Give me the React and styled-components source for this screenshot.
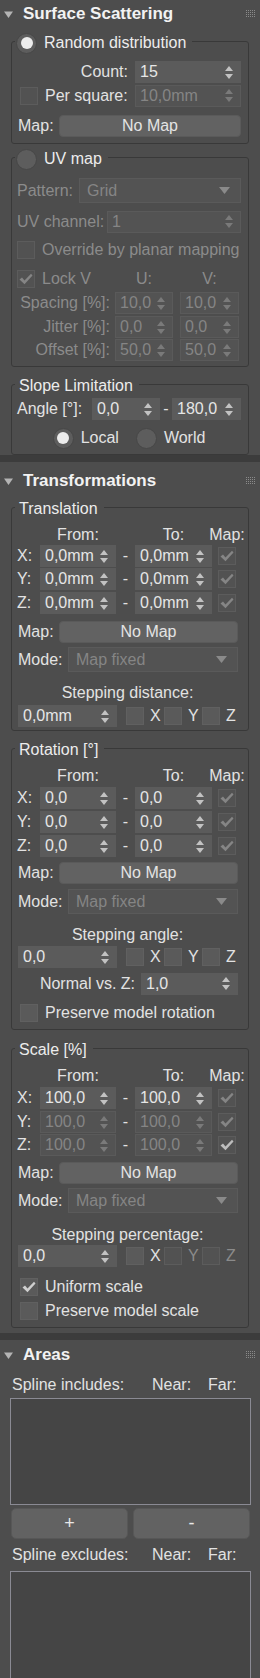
import React from 'react'
import styled, { createGlobalStyle } from 'styled-components'

const GlobalStyle = createGlobalStyle`
  html, body {
    margin: 0;
    padding: 0;
    background: #4d4d4d;
  }
  body {
    font-family: "Liberation Sans", Arial, sans-serif;
    font-size: 16px;
    color: #e2e2e2;
  }
  * { box-sizing: border-box; }
`

const Panel = styled.div`
  width: 260px;
  height: 1678px;
  overflow: hidden;
  background: #4d4d4d;
`

const Divider = styled.div`
  height: 7px;
  background: #3c3c3c;
`

const Rollout = styled.section`
  padding-bottom: ${p => p.$pb ?? 0}px;
`

const Header = styled.div`
  display: flex;
  align-items: center;
  height: ${p => p.$h}px;
  padding: ${p => p.$pt ?? 0}px 5px 0 4px;
`

const Title = styled.h2`
  flex: 1;
  margin: 0 0 0 10px;
  font-size: 17px;
  font-weight: bold;
  color: #f2f2f2;
`

const Body = styled.div`
  padding: ${p => p.$pad ?? '0 11px'};
`

const Group = styled.fieldset`
  margin: ${p => p.$mt ?? 0}px 0 0;
  padding: ${p => p.$pt}px ${p => p.$pr ?? 7}px ${p => p.$pb}px 5px;
  border: 1px solid #393939;
  border-radius: 3px;
  min-width: 0;
`

const Legend = styled.legend`
  display: flex;
  align-items: center;
  gap: 7px;
  height: 26px;
  padding: 4px 6px 0 ${p => p.$pl ?? 4}px;
  margin-left: ${p => p.$ml ?? -2}px;
  color: #ececec;
  white-space: nowrap;
`

const Row = styled.div`
  display: flex;
  align-items: center;
  gap: ${p => p.$gap ?? 0}px;
  height: ${p => p.$h ?? 22}px;
  margin-top: ${p => p.$mt ?? 0}px;
  justify-content: ${p => p.$justify ?? 'flex-start'};
`

const Label = styled.span`
  flex: ${p => (p.$w ? 'none' : p.$grow ? 1 : 'none')};
  width: ${p => (p.$w ? `${p.$w}px` : 'auto')};
  margin-left: ${p => p.$ml ?? 0}px;
  padding-right: ${p => p.$pr ?? 0}px;
  text-align: ${p => p.$align ?? 'left'};
  color: ${p => (p.$off ? '#8b8b8b' : '#e2e2e2')};
  white-space: nowrap;
`

const Field = styled.div`
  display: flex;
  align-items: center;
  flex: ${p => (p.$w ? 'none' : 1)};
  width: ${p => (p.$w ? `${p.$w}px` : 'auto')};
  height: 22px;
  margin-left: ${p => p.$ml ?? 0}px;
  padding: 0 7px 0 4px;
  background: ${p => (p.$off ? '#535353' : '#5b5b5b')};
  border: 1px solid ${p => (p.$off ? '#5a5a5a' : '#5b5b5b')};
  color: ${p => (p.$off ? '#858585' : '#e6e6e6')};
`

const FieldValue = styled.span`
  flex: 1;
  white-space: nowrap;
  overflow: hidden;
`

const Select = styled.div`
  display: flex;
  align-items: center;
  flex: 1;
  height: 25px;
  padding: 0 10px 0 7px;
  background: #535353;
  border: 1px solid #5a5a5a;
  color: #858585;
`

const MapButton = styled.button`
  flex: 1;
  height: 22px;
  padding: 0;
  border: 1px solid #5a5a5a;
  border-radius: 4px;
  background: #626262;
  color: #e4e4e4;
  font: inherit;
`

const Box = styled.span`
  display: grid;
  place-items: center;
  flex: none;
  width: 18px;
  height: 18px;
  margin-left: ${p => p.$ml ?? 0}px;
  background: ${p => (p.$off ? '#525252' : '#5a5a5a')};
  border: 1px solid ${p => (p.$off ? '#5c5c5c' : '#606060')};
`

const RadioDot = styled.span`
  display: grid;
  place-items: center;
  flex: none;
  width: 21px;
  height: 21px;
  border-radius: 50%;
  background: #5d5d5d;
  border: 1px solid #474747;

  &::after {
    content: '';
    display: ${p => (p.$on ? 'block' : 'none')};
    width: 12px;
    height: 12px;
    border-radius: 50%;
    background: #ececec;
  }
`

const PairGrid = styled.div`
  display: grid;
  grid-template-columns: 93px 58px 61px;
  column-gap: 5px;
  align-items: center;
  height: 22px;
  margin-top: ${p => p.$mt ?? 0}px;

  & > :nth-child(3) { margin-left: 2px; }
`

const AxisGrid = styled.div`
  display: grid;
  grid-template-columns: 23px 76px 19px 77px 6px 18px;
  align-items: center;
  height: ${p => p.$h ?? 22}px;
  margin-top: ${p => p.$mt ?? 0}px;
`

const Center = styled.span`
  justify-self: center;
  white-space: nowrap;
  color: ${p => (p.$off ? '#8b8b8b' : '#e2e2e2')};
`

const Caption = styled.div`
  height: 20px;
  margin-top: ${p => p.$mt ?? 0}px;
  line-height: 20px;
  text-align: center;
`

const StepCells = styled.div`
  display: grid;
  grid-template-columns: repeat(3, 38px);
  margin-left: 9px;
`

const StepCell = styled.span`
  display: flex;
  align-items: center;
  gap: 6px;
  color: ${p => (p.$off ? '#8b8b8b' : '#e2e2e2')};
`

const ListBox = styled.div`
  height: ${p => p.$h}px;
  margin-top: ${p => p.$mt}px;
  background: #454545;
  border: 1px solid #8a8a93;
`

const ListHead = styled.div`
  display: grid;
  grid-template-columns: 140px 56px auto;
  height: 18px;
  margin-top: ${p => p.$mt}px;
  padding-left: 2px;
  line-height: 18px;
`

const ButtonPair = styled.div`
  display: grid;
  grid-template-columns: 117px 117px;
  column-gap: 5px;
  margin: 3px 0 0 1px;
`

const FlatButton = styled.button`
  height: 31px;
  border: 1px solid #575757;
  border-radius: 5px;
  background: #626262;
  color: #e8e8e8;
  font: 18px "Liberation Sans", Arial, sans-serif;
`

const Triangle = () => (
  <svg width="9" height="7" viewBox="0 0 9 7">
    <path d="M0 0.5 L9 0.5 L4.5 7 Z" fill="#b4b4b4" />
  </svg>
)

const Grip = () => (
  <svg width="9" height="8" viewBox="0 0 9 8">
    {[0, 2, 4, 6].map(y =>
      [0, 2, 4, 6, 8].map(x => <rect key={`${x}-${y}`} x={x} y={y} width="1" height="1" fill="#8a8a8a" />)
    )}
  </svg>
)

const Arrows = ({ off }) => (
  <svg width="8" height="15" viewBox="0 0 8 15">
    <path d="M0 6 L4 1 L8 6 Z" fill={off ? '#7a7a7a' : '#c2c2c2'} />
    <path d="M0 9 L4 14 L8 9 Z" fill={off ? '#7a7a7a' : '#c2c2c2'} />
  </svg>
)

// heavy check, like the ✔ the original control draws
const Tick = ({ color = '#858585' }) => (
  <svg width="14" height="12" viewBox="0 0 14 12">
    <path d="M0.5 6.5 L3 4.5 L5.5 7.5 L12 0.8 L13.5 2.5 L5.5 11.2 Z" fill={color} />
  </svg>
)

const DownArrow = () => (
  <svg width="11" height="7" viewBox="0 0 11 7">
    <path d="M0 0 L11 0 L5.5 7 Z" fill="#8a8a8a" />
  </svg>
)

const Spinner = ({ value, off, w, ml }) => (
  <Field $off={off} $w={w} $ml={ml}>
    <FieldValue>{value}</FieldValue>
    <Arrows off={off} />
  </Field>
)

const Dropdown = ({ value }) => (
  <Select>
    <FieldValue>{value}</FieldValue>
    <DownArrow />
  </Select>
)

const Check = ({ on, off, ml, tick }) => (
  <Box $off={off} $ml={ml}>{on && <Tick color={tick} />}</Box>
)

const RolloutHeader = ({ title, h, pt }) => (
  <Header $h={h} $pt={pt}>
    <Triangle />
    <Title>{title}</Title>
    <Grip />
  </Header>
)

const AxisRows = ({ rows, mt }) =>
  rows.map((r, i) => (
    <AxisGrid key={r.axis} $mt={mt[i]}>
      <Label>{r.axis}:</Label>
      <Spinner value={r.from} off={r.off} />
      <Center>-</Center>
      <Spinner value={r.to} off={r.off} />
      <span />
      <Check on off tick={r.tick} />
    </AxisGrid>
  ))

const Stepping = ({ value, w = 99, off }) => (
  <Row $mt={0}>
    <Spinner value={value} w={w} ml={1} />
    <StepCells>
      {['X', 'Y', 'Z'].map((a, i) => (
        <StepCell key={a} $off={off && i > 0}>
          <Check off={off && i > 0} />
          {a}
        </StepCell>
      ))}
    </StepCells>
  </Row>
)

const TransformGroup = ({ title, rows, axisMt, mt, step, stepLabel, stepMt, pb, gaps, children }) => (
  <Group $mt={mt} $pt={6} $pb={pb} $pr={10}>
    <Legend>{title}</Legend>
    <AxisGrid $h={18}>
      <span />
      <Center>From:</Center>
      <span />
      <Center>To:</Center>
      <span />
      <Center>Map:</Center>
    </AxisGrid>
    <AxisRows rows={rows} mt={axisMt} />
    <Row $mt={gaps[0]}>
      <Label $w={41} $ml={1}>Map:</Label>
      <MapButton>No Map</MapButton>
    </Row>
    <Row $h={25} $mt={gaps[1]}>
      <Label $w={50} $ml={1}>Mode:</Label>
      <Dropdown value="Map fixed" />
    </Row>
    <Caption $mt={stepMt}>{stepLabel}</Caption>
    <Row $mt={gaps[2]}>
      {step}
    </Row>
    {children}
  </Group>
)

export default function App() {
  return (
    <Panel>
      <GlobalStyle />

      <Rollout>
        <RolloutHeader title="Surface Scattering" h={28} />
        <Body>
          <Group $pt={7} $pb={6}>
            <Legend $pl={1}>
              <RadioDot $on />
              Random distribution
            </Legend>
            <Row>
              <Label $grow $align="right" $pr={7}>Count:</Label>
              <Spinner value="15" w={106} />
            </Row>
            <Row $mt={1} $h={23}>
              <Check ml={3} off />
              <Label $ml={7}>Per square:</Label>
              <Label $grow />
              <Spinner value="10,0mm" w={106} off />
            </Row>
            <Row $mt={7} $h={23}>
              <Label $w={41} $ml={1}>Map:</Label>
              <MapButton>No Map</MapButton>
            </Row>
          </Group>

          <Group $pt={8} $pb={5}>
            <Legend $pl={1}>
              <RadioDot />
              UV map
            </Legend>
            <Row $h={25}>
              <Label $w={62} $off>Pattern:</Label>
              <Dropdown value="Grid" />
            </Row>
            <Row $mt={7} $h={23}>
              <Label $w={90} $off>UV channel:</Label>
              <Spinner value="1" off />
            </Row>
            <Row $mt={6}>
              <Check off />
              <Label $ml={7} $off>Override by planar mapping</Label>
            </Row>
            <PairGrid $mt={7}>
              <Row>
                <Check on off />
                <Label $ml={7} $off>Lock V</Label>
              </Row>
              <Center $off>U:</Center>
              <Center $off>V:</Center>
            </PairGrid>
            {[
              ['Spacing [%]:', '10,0', '10,0', 2],
              ['Jitter [%]:', '0,0', '0,0', 2],
              ['Offset [%]:', '50,0', '50,0', 1]
            ].map(([label, u, v, mt]) => (
              <PairGrid key={label} $mt={mt}>
                <Label $align="right" $off>{label}</Label>
                <Spinner value={u} off />
                <Spinner value={v} off />
              </PairGrid>
            ))}
          </Group>

          <Group $mt={4} $pt={1} $pb={5}>
            <Legend>Slope Limitation</Legend>
            <Row>
              <Label $w={75}>Angle [°]:</Label>
              <Spinner value="0,0" w={68} />
              <Label $w={12} $align="center">-</Label>
              <Spinner value="180,0" />
            </Row>
            <Row $mt={7} $justify="center" $gap={7}>
              <RadioDot $on />
              <Label $pr={10}>Local</Label>
              <RadioDot />
              <Label>World</Label>
            </Row>
          </Group>
        </Body>
      </Rollout>

      <Divider />

      <Rollout $pb={5}>
        <RolloutHeader title="Transformations" h={32} pt={6} />
        <Body>
          <TransformGroup
            title="Translation"
            pb={3}
            rows={[
              { axis: 'X', from: '0,0mm', to: '0,0mm' },
              { axis: 'Y', from: '0,0mm', to: '0,0mm' },
              { axis: 'Z', from: '0,0mm', to: '0,0mm' }
            ]}
            axisMt={[1, 1, 2]}
            gaps={[7, 4, 2]}
            stepMt={11}
            stepLabel="Stepping distance:"
            step={<Stepping value="0,0mm" />}
          />

          <TransformGroup
            title="Rotation [°]"
            mt={4}
            pb={5}
            rows={[
              { axis: 'X', from: '0,0', to: '0,0' },
              { axis: 'Y', from: '0,0', to: '0,0' },
              { axis: 'Z', from: '0,0', to: '0,0' }
            ]}
            axisMt={[2, 2, 2]}
            gaps={[5, 5, 1]}
            stepMt={11}
            stepLabel="Stepping angle:"
            step={<Stepping value="0,0" />}
          >
            <Row $mt={4} $h={23}>
              <Label $grow $align="right" $pr={6}>Normal vs. Z:</Label>
              <Spinner value="1,0" w={97} />
            </Row>
            <Row $mt={7}>
              <Check ml={3} />
              <Label $ml={7}>Preserve model rotation</Label>
            </Row>
          </TransformGroup>

          <TransformGroup
            title="Scale [%]"
            mt={5}
            pb={5}
            rows={[
              { axis: 'X', from: '100,0', to: '100,0' },
              { axis: 'Y', from: '100,0', to: '100,0', off: true },
              { axis: 'Z', from: '100,0', to: '100,0', off: true, tick: '#bdbdbd' }
            ]}
            axisMt={[2, 2, 1]}
            gaps={[6, 4, 0]}
            stepMt={12}
            stepLabel="Stepping percentage:"
            step={<Stepping value="0,0" off />}
          >
            <Row $mt={9}>
              <Check on ml={3} tick="#cfcfcf" />
              <Label $ml={7}>Uniform scale</Label>
            </Row>
            <Row $mt={2}>
              <Check ml={3} />
              <Label $ml={7}>Preserve model scale</Label>
            </Row>
          </TransformGroup>
        </Body>
      </Rollout>

      <Divider />

      <Rollout>
        <RolloutHeader title="Areas" h={30} />
        <Body $pad="0 9px 0 10px">
          <ListHead $mt={6}>
            <span>Spline includes:</span>
            <span>Near:</span>
            <span>Far:</span>
          </ListHead>
          <ListBox $h={107} $mt={4} />
          <ButtonPair>
            <FlatButton>+</FlatButton>
            <FlatButton>-</FlatButton>
          </ButtonPair>
          <ListHead $mt={7}>
            <span>Spline excludes:</span>
            <span>Near:</span>
            <span>Far:</span>
          </ListHead>
          <ListBox $h={120} $mt={7} />
        </Body>
      </Rollout>
    </Panel>
  )
}
